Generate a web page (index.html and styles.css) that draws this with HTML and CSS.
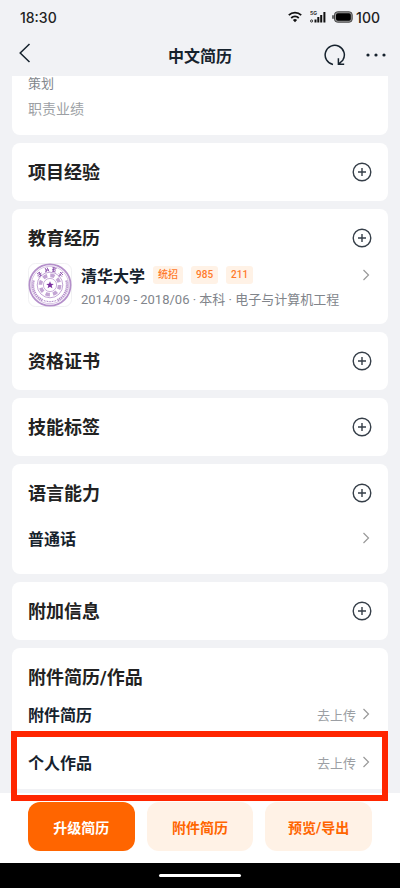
FILE: index.html
```html
<!DOCTYPE html>
<html lang="zh-CN">
  <head>
    <meta charset="utf-8">
    <meta name="viewport" content="width=device-width, initial-scale=1">
    <title>中文简历</title>
    <link rel="stylesheet" href="styles.css">
  </head>
  <body>
    <svg class="sprite" aria-hidden="true">
      <symbol id="plus" viewBox="0 0 20 20">
        <circle cx="10" cy="10" r="8.8"/>
        <path d="M10 6v8M6 10h8"/>
      </symbol>
      <symbol id="arrow" viewBox="0 0 12 12">
        <path d="M3.5 1l5 5-5 5"/>
      </symbol>
    </svg>

    <div class="status_bar">
      <span>18:30</span>
      <div class="status_icons">
        <svg class="icon_wifi" viewBox="0 0 14 12">
          <path d="M.8 4.2a9 9 0 0 1 12.4 0M3.2 7a5.6 5.6 0 0 1 7.6 0" fill="none" stroke="#111" stroke-width="1.8"/>
          <path d="M4.9 8.9a3.2 3.2 0 0 1 4.2 0L7 11.2z" fill="#111"/>
        </svg>
        <svg class="icon_signal" viewBox="0 0 16 12">
          <text x="0" y="4.4" class="signal_text">5G</text>
          <circle cx="1.6" cy="10" r="1.1" fill="none" stroke="#333" stroke-width="1"/>
          <path d="M5.5 11.5V8.5M8.3 11.5V6M11.2 11.5V4M14.4 11.5V1" stroke="#111" stroke-width="2"/>
        </svg>
        <svg class="icon_battery" viewBox="0 0 21 12">
          <rect x="2.5" y=".8" width="17.7" height="10.4" rx="3" fill="#999" stroke="#444"/>
          <rect x="4" y="2.2" width="14.8" height="7.6" rx="1.8" fill="#000"/>
          <path d="M1 4.2v3.6" stroke="#444" stroke-width="1.6"/>
        </svg>
        <span>100</span>
      </div>
    </div>

    <header class="nav">
      <div class="nav_left">
        <button class="nav_btn" aria-label="返回">
          <svg class="icon_back" viewBox="0 0 12 20"><path d="M10.5 1L1.2 10l9.3 9"/></svg>
        </button>
      </div>
      <h1 class="nav_title">中文简历</h1>
      <div class="nav_right">
        <button class="nav_btn" aria-label="刷新">
          <svg class="icon_refresh" viewBox="0 0 22 22"><path d="M9 20.4A9.6 9.6 0 1 1 18.8 16.2L14.4 20.2M14.4 14.2v6h5.8"/></svg>
        </button>
        <button class="nav_btn" aria-label="更多">
          <svg class="icon_more" viewBox="0 0 20 4"><circle cx="2" cy="2" r="1.6"/><circle cx="10" cy="2" r="1.6"/><circle cx="18" cy="2" r="1.6"/></svg>
        </button>
      </div>
    </header>

    <main class="resume">
      <section class="card card_work">
        <p class="work_type">策划</p>
        <p class="work_desc">职责业绩</p>
      </section>

      <section class="card">
        <div class="card_head">
          <h2>项目经验</h2>
          <button class="add_btn" aria-label="添加项目经验"><svg><use href="#plus"/></svg></button>
        </div>
      </section>

      <section class="card card_edu">
        <div class="card_head">
          <h2>教育经历</h2>
          <button class="add_btn" aria-label="添加教育经历"><svg><use href="#plus"/></svg></button>
        </div>
        <a class="school" href="#">
          <svg class="school_logo" viewBox="0 0 44 44">
            <rect x=".5" y=".5" width="43" height="43" rx="7" fill="#fff" stroke="#f1f1f3"/>
            <g fill="none" stroke="#b48fca">
              <circle cx="22" cy="22" r="20.6" stroke-width="1.8"/>
              <circle cx="22" cy="22" r="18.7" stroke-width=".5"/>
              <path d="M5.6 17.5A17 17 0 0 0 15.2 37.6M38.4 17.5A17 17 0 0 1 28.8 37.6" stroke-width="2.4" stroke-dasharray="1.3 .7"/>
              <path d="M16 37.5a17 17 0 0 0 12 0" stroke-width="1.2" stroke-dasharray="1 .6"/>
              <circle cx="22" cy="22" r="12.8" stroke-width=".8"/>
              <circle cx="22" cy="22" r="9.6" stroke="#c3a5d4" stroke-width="3.6" stroke-dasharray="4.4 3.14"/>
              <circle cx="22" cy="22" r="6.6" stroke-width=".7"/>
            </g>
            <g fill="none" stroke="#8a4fab" stroke-width=".9">
              <path d="M9 11l3-2M9.5 12.8l4-2.8M11 9l2 4M10.5 14l3-2"/>
              <path d="M17 5l2 3-2 1M19 4.5l2 4M17 7h4"/>
              <path d="M24.5 4.5l4 1M24 6.2l4 1M26 4l-.8 4.5M24 8l3.6 1"/>
              <path d="M32 9l3 3M31 10.6l3 3M34.5 9l-3.6 4.6"/>
            </g>
            <path d="M22 18.2l1 2.6 2.8.1-2.2 1.7.8 2.7-2.4-1.5-2.4 1.5.8-2.7-2.2-1.7 2.8-.1z" fill="#7b2fa0"/>
          </svg>
          <div class="school_info">
            <div class="school_line">
              <strong class="school_name">清华大学</strong>
              <span class="tag">统招</span>
              <span class="tag">985</span>
              <span class="tag">211</span>
              <svg class="arrow"><use href="#arrow"/></svg>
            </div>
            <p class="school_desc">2014/09 - 2018/06 · 本科 · 电子与计算机工程</p>
          </div>
        </a>
      </section>

      <section class="card">
        <div class="card_head">
          <h2>资格证书</h2>
          <button class="add_btn" aria-label="添加资格证书"><svg><use href="#plus"/></svg></button>
        </div>
      </section>

      <section class="card">
        <div class="card_head">
          <h2>技能标签</h2>
          <button class="add_btn" aria-label="添加技能标签"><svg><use href="#plus"/></svg></button>
        </div>
      </section>

      <section class="card card_lang">
        <div class="card_head">
          <h2>语言能力</h2>
          <button class="add_btn" aria-label="添加语言能力"><svg><use href="#plus"/></svg></button>
        </div>
        <a class="row" href="#">
          <span class="row_name">普通话</span>
          <svg class="arrow"><use href="#arrow"/></svg>
        </a>
      </section>

      <section class="card">
        <div class="card_head">
          <h2>附加信息</h2>
          <button class="add_btn" aria-label="添加附加信息"><svg><use href="#plus"/></svg></button>
        </div>
      </section>

      <section class="card card_files">
        <div class="card_head">
          <h2>附件简历/作品</h2>
        </div>
        <a class="row" href="#">
          <span class="row_name">附件简历</span>
          <span class="row_action">去上传</span>
          <svg class="arrow"><use href="#arrow"/></svg>
        </a>
        <a class="row row_marked" href="#">
          <span class="row_name">个人作品</span>
          <span class="row_action">去上传</span>
          <svg class="arrow"><use href="#arrow"/></svg>
        </a>
      </section>
    </main>

    <footer class="actions">
      <button class="btn btn_main">升级简历</button>
      <button class="btn">附件简历</button>
      <button class="btn">预览/导出</button>
    </footer>
    <div class="home_bar"><span></span></div>
  </body>
</html>
```

FILE: styles.css
```css
* { box-sizing: border-box; margin: 0; padding: 0; }
body {
  display: flex;
  flex-direction: column;
  min-height: 100vh;
  background: #f1f2f5;
  color: #222;
  font-family: Roboto, "Noto Sans CJK SC", sans-serif;
}
a { color: inherit; text-decoration: none; }
button { border: 0; background: none; font-family: inherit; cursor: pointer; }
svg { display: block; }
.sprite { position: absolute; width: 0; height: 0; }

/* status bar */
.status_bar { display: flex; justify-content: space-between; align-items: center; height: 34px; padding: 0 20px; font-family: Inter, sans-serif; font-size: 14px; font-weight: 500; }
.status_icons { display: flex; align-items: center; }
.icon_wifi { width: 14px; height: 12px; margin-right: 8px; }
.icon_signal { width: 16px; height: 12px; margin-right: 6px; }
.icon_battery { width: 21px; height: 12px; margin-right: 3px; }
.signal_text { font-size: 5px; font-weight: 700; fill: #333; }

/* nav */
.nav { display: grid; grid-template-columns: 1fr auto 1fr; align-items: center; height: 42px; padding: 0 14px; }
.nav_left { padding-left: 5px; }
.nav_title { color: #16222d; font-size: 16px; font-weight: 700; }
.nav_right { display: flex; justify-content: flex-end; align-items: center; gap: 20px; }
.nav_btn svg { fill: none; stroke: #16222d; stroke-width: 1.5; }
.icon_back { width: 12px; height: 20px; }
.icon_refresh { width: 22px; height: 22px; }
.nav_btn .icon_more { width: 20px; height: 4px; fill: #16222d; stroke: none; }

/* cards */
.resume { display: flex; flex-direction: column; flex: 1; gap: 8px; padding: 0 12px 4px; }
.card { padding: 16px; border-radius: 8px; background: #fff; }
.card_head { display: flex; justify-content: space-between; align-items: center; height: 26px; }
.card_head h2 { padding-top: 2px; font-size: 18px; font-weight: 700; line-height: 26px; }
.add_btn svg { width: 20px; height: 20px; fill: none; stroke: #353e48; stroke-width: 1.4; }
.arrow { width: 12px; height: 12px; fill: none; stroke: #999; stroke-width: 1.2; }

.card_work { padding: 0 16px 13px; border-radius: 0 0 8px 8px; }
.work_type { color: #81858b; font-size: 13px; line-height: 16px; }
.work_desc { margin-top: 4px; color: #9c9fa4; font-size: 14px; line-height: 26px; }

.card_edu { padding-bottom: 14px; }
.school { display: flex; gap: 9px; margin-top: 12px; }
.school_logo { flex: none; width: 44px; height: 44px; }
.school_info { flex: 1; }
.school_line { display: flex; align-items: center; gap: 8px; height: 24px; }
.school_line .arrow { margin-left: auto; }
.school_name { color: #16222d; font-size: 16px; font-weight: 700; }
.tag { padding: 0 5px; border-radius: 3px; background: #fff2e6; color: #ff7a2b; font-size: 10px; font-weight: 500; line-height: 18px; }
.school_desc { margin-top: 3px; color: #81858b; font-size: 13px; line-height: 20px; }

.row { position: relative; display: flex; align-items: center; height: 48px; }
.row_name { flex: 1; color: #16222d; font-size: 16px; font-weight: 700; }
.row_action { margin-right: 4px; color: #9c9fa4; font-size: 13px; }
.card_lang { padding-bottom: 12px; }
.card_lang .row { margin-top: 8px; }
.card_files { padding-bottom: 3px; }
.row_marked::after { content: ""; position: absolute; z-index: 1; top: -7px; right: -16px; bottom: -15px; left: -17px; border: 6px solid #ff2600; }

/* bottom */
.actions { display: flex; gap: 12px; padding: 9px 28px 12px; background: #fff; }
.btn { flex: 1; height: 49px; border-radius: 12px; background: #fff2e6; color: #ff6500; font-size: 14px; font-weight: 700; }
.btn_main { background: #ff6500; color: #fff; }
.home_bar { display: flex; justify-content: center; align-items: center; height: 25px; background: #000; }
.home_bar span { width: 82px; height: 3px; border-radius: 2px; background: #fff; }
```
